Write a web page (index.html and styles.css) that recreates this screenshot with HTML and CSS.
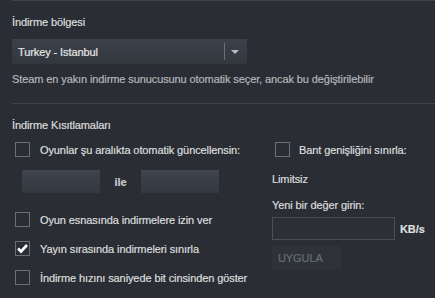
FILE: index.html
```html
<!DOCTYPE html>
<html lang="tr">

<head>
    <meta charset="UTF-8">
    <title>İndirmeler</title>
    <link rel="stylesheet" href="styles.css">
</head>

<body>
    <div class="panel">
        <section class="region">
            <div class="title">İndirme bölgesi</div>
            <div class="select">
                <span class="select-value">Turkey - Istanbul</span>
                <span class="select-sep"></span>
                <span class="select-arrow"></span>
            </div>
            <div class="hint">Steam en yakın indirme sunucusunu otomatik seçer, ancak bu değiştirilebilir</div>
        </section>

        <section class="limits">
            <div class="title">İndirme Kısıtlamaları</div>
            <div class="columns">
                <div class="left">
                    <label class="check"><span class="box"></span>Oyunlar şu aralıkta otomatik güncellensin:</label>
                    <div class="range">
                        <span class="field"></span>
                        <span class="range-word">ile</span>
                        <span class="field"></span>
                    </div>
                    <label class="check gap"><span class="box"></span>Oyun esnasında indirmelere izin ver</label>
                    <label class="check"><span class="box"><svg class="tick" viewBox="0 0 13 13"><path d="M2 6.5 L5 9.5 L11 3" /></svg></span>Yayın sırasında indirmeleri sınırla</label>
                    <label class="check"><span class="box"></span>İndirme hızını saniyede bit cinsinden göster</label>
                </div>
                <div class="right">
                    <label class="check"><span class="box"></span>Bant genişliğini sınırla:</label>
                    <div class="limit-value">Limitsiz</div>
                    <div class="limit-label">Yeni bir değer girin:</div>
                    <div class="rate">
                        <span class="rate-input"></span>
                        <span class="rate-unit">KB/s</span>
                    </div>
                    <button class="apply">UYGULA</button>
                </div>
            </div>
        </section>
    </div>
</body>

</html>
```

FILE: styles.css
```css
body {
    margin: 0;
    background-color: #2a2d33;
    font-family: 'Liberation Sans', Arial, sans-serif;
    font-size: 11px;
    letter-spacing: -0.1px;
    color: #dcdedf;
    -webkit-text-stroke: 0.2px;
}

.panel {
    margin-left: 12px;
    border-top: 1px solid #3f434a;
}

.title {
    color: #dcdedf;
}

.region {
    padding-top: 15px;
    padding-bottom: 18px;
    border-bottom: 1px solid #3f434a;
}

.select {
    display: flex;
    align-items: center;
    width: 235px;
    height: 25px;
    margin-top: 11px;
    background: linear-gradient(to bottom, #3d414a, #32363d);
    box-sizing: border-box;
    padding-left: 6px;
}

.select-value {
    flex: 1;
    font-size: 11px;
    color: #e4e6e8;
}

.select-sep {
    width: 1px;
    height: 17px;
    background-color: #6b6f76;
}

.select-arrow {
    width: 0;
    height: 0;
    margin: 1px 8px 0 6px;
    border-left: 4px solid transparent;
    border-right: 4px solid transparent;
    border-top: 4px solid #b7babe;
}

.hint {
    margin-top: 9px;
    color: #b3b7bb;
}

.limits {
    padding-top: 15px;
}

.columns {
    display: grid;
    grid-template-columns: 260px 1fr;
    margin-top: 11px;
}

.check {
    display: flex;
    align-items: center;
    gap: 10px;
    height: 15px;
    margin-bottom: 14px;
    color: #dcdedf;
}

.left .check {
    padding-left: 3px;
}

.box {
    width: 15px;
    height: 15px;
    box-sizing: border-box;
    border: 1px solid #6c7075;
    flex-shrink: 0;
    display: flex;
    align-items: center;
    justify-content: center;
}

.tick {
    width: 13px;
    height: 13px;
    fill: none;
    stroke: #ffffff;
    stroke-width: 2.6;
}

.range {
    display: flex;
    align-items: center;
    padding-left: 10px;
    margin-top: -1px;
}

.field {
    width: 78px;
    height: 23px;
    background: linear-gradient(to bottom, #3f444d, #33373e);
}

.range-word {
    width: 41px;
    text-align: center;
    font-weight: bold;
    color: #c9ccce;
}

.check.gap {
    margin-top: 19px;
}

.right .check {
    padding-left: 3px;
    gap: 9px;
}

.limit-value {
    margin-top: 16px;
    color: #dcdedf;
}

.limit-label {
    margin-top: 14px;
    color: #dcdedf;
}

.rate {
    display: flex;
    align-items: center;
    gap: 5px;
    margin-top: 6px;
}

.rate-input {
    width: 123px;
    height: 23px;
    box-sizing: border-box;
    border: 1px solid #4b5058;
    background-color: #2c3036;
}

.rate-unit {
    font-weight: bold;
    color: #dcdedf;
}

.apply {
    display: block;
    margin-top: 6px;
    width: 69px;
    height: 24px;
    border: none;
    padding: 0 0 0 6px;
    text-align: left;
    background-color: #2f3338;
    color: #666c74;
    font-family: 'Liberation Sans', Arial, sans-serif;
    font-size: 11px;
    letter-spacing: -0.1px;
}
```
